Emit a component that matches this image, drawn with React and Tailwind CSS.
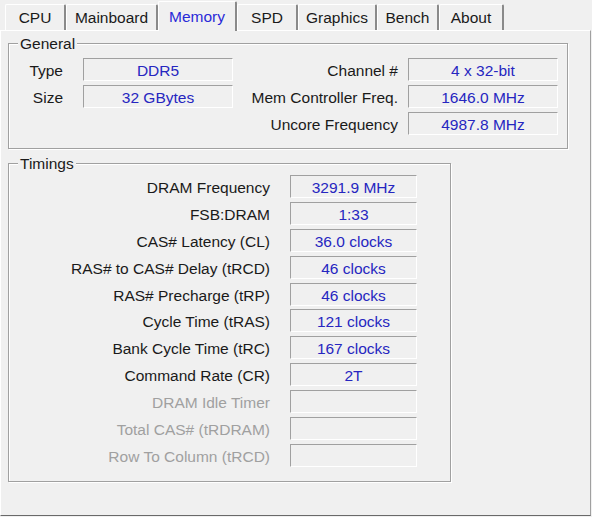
import React from 'react';

const tabs = [
  { name: 'CPU', w: 'w-[61px]' },
  { name: 'Mainboard', w: 'w-[92px]' },
  { name: 'Memory', w: 'w-[79px]', active: true },
  { name: 'SPD', w: 'w-[61px]' },
  { name: 'Graphics', w: 'w-[79px]' },
  { name: 'Bench', w: 'w-[62px]' },
  { name: 'About', w: 'w-[65px]' },
];

const timings = [
  ['DRAM Frequency', '3291.9 MHz'],
  ['FSB:DRAM', '1:33'],
  ['CAS# Latency (CL)', '36.0 clocks'],
  ['RAS# to CAS# Delay (tRCD)', '46 clocks'],
  ['RAS# Precharge (tRP)', '46 clocks'],
  ['Cycle Time (tRAS)', '121 clocks'],
  ['Bank Cycle Time (tRC)', '167 clocks'],
  ['Command Rate (CR)', '2T'],
  ['DRAM Idle Timer', '', true],
  ['Total CAS# (tRDRAM)', '', true],
  ['Row To Column (tRCD)', '', true],
];

// sunken read-only field
const Field = ({ value, className = '' }) => (
  <div
    className={`h-[23px] border-t border-l border-t-[#a0a0a0] border-l-[#a0a0a0] border-b border-r border-b-white border-r-white text-center leading-[23px] text-[#2626c0] ${className}`}
  >
    {value}
  </div>
);

const Label = ({ className = '', children }) => (
  <span className={`text-right leading-[19px] pt-[2px] ${className}`}>{children}</span>
);

const Group = ({ title, className, children }) => (
  <div
    className={`relative border border-[#a0a0a0] shadow-[1px_1px_0_#ffffff,inset_1px_1px_0_#ffffff] ${className}`}
  >
    <span className="absolute -top-[9px] left-[9px] px-[2px] bg-[#f0f0f0] leading-[18px]">{title}</span>
    {children}
  </div>
);

export default function App() {
  return (
    <div className="w-[592px] h-[517px] overflow-hidden bg-[#f0f0f0] font-['Liberation_Sans',Arial,sans-serif] text-[15.5px] text-[#1a1a1a]">
      <div className="h-[30px] flex items-end pl-[5px]">
        {tabs.map((t) =>
          t.active ? (
            <div
              key={t.name}
              className={`${t.w} h-[30px] -mb-px relative z-10 flex items-center justify-center pt-[1px] bg-[#f0f0f0] border-l border-t border-white border-r-2 border-r-[#8a8a8a] rounded-t-[2px] text-[#2a2ad8]`}
            >
              {t.name}
            </div>
          ) : (
            <div
              key={t.name}
              className={`${t.w} h-[26px] flex items-center justify-center pt-[1px] bg-[#f0f0f0] border-l border-t border-white border-r-2 border-r-[#8a8a8a] rounded-t-[2px]`}
            >
              {t.name}
            </div>
          )
        )}
      </div>

      <div className="w-[591px] h-[486px] border-t border-l border-white border-r border-r-[#a0a0a0] border-b border-b-[#696969] flex flex-col items-start">
        <Group title="General" className="mt-[12px] ml-[7px] w-[560px] h-[106px]">
          <div className="pt-[14px] flex flex-col gap-[4px]">
            <div className="flex items-center h-[23px]">
              <Label className="w-[54px]">Type</Label>
              <Field value="DDR5" className="ml-[20px] w-[150px]" />
              <Label className="w-[165px]">Channel #</Label>
              <Field value="4 x 32-bit" className="ml-[10px] w-[150px]" />
            </div>
            <div className="flex items-center h-[23px]">
              <Label className="w-[54px]">Size</Label>
              <Field value="32 GBytes" className="ml-[20px] w-[150px]" />
              <Label className="w-[165px]">Mem Controller Freq.</Label>
              <Field value="1646.0 MHz" className="ml-[10px] w-[150px]" />
            </div>
            <div className="flex items-center h-[23px]">
              <span className="w-[224px]" />
              <Label className="w-[165px]">Uncore Frequency</Label>
              <Field value="4987.8 MHz" className="ml-[10px] w-[150px]" />
            </div>
          </div>
        </Group>

        <Group title="Timings" className="mt-[14px] ml-[7px] w-[443px] h-[319px]">
          <div className="pt-[11px] flex flex-col gap-[3.9px]">
            {timings.map(([label, value, off]) => (
              <div key={label} className="flex items-center h-[23px]">
                <Label className={`w-[261px] ${off ? 'text-[#a0a0a0]' : ''}`}>{label}</Label>
                <Field value={value} className="ml-[20px] w-[127px]" />
              </div>
            ))}
          </div>
        </Group>
      </div>
    </div>
  );
}
